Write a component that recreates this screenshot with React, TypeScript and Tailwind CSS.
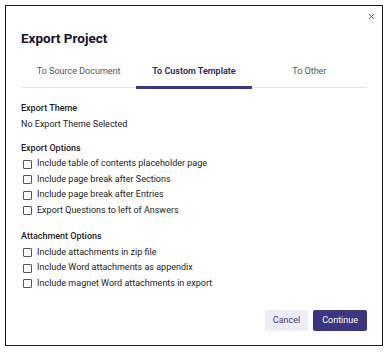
import { X } from 'lucide-react';

const exportOptions = [
  'Include table of contents placeholder page',
  'Include page break after Sections',
  'Include page break after Entries',
  'Export Questions to left of Answers',
];

const attachmentOptions = [
  'Include attachments in zip file',
  'Include Word attachments as appendix',
  'Include magnet Word attachments in export',
];

function CheckRow({ label }: { label: string }) {
  return (
    <label className="flex items-center gap-[5px] h-[15.5px] text-[9px] text-[#222]">
      <span className="ml-[2px] w-[9px] h-[9px] border border-[#555] rounded-[1px] bg-white" />
      {label}
    </label>
  );
}

export default function App() {
  const tabs = ['To Source Document', 'To Custom Template', 'To Other'];
  const active = 1;

  return (
    <div className="w-[390px] h-[353px] bg-white pl-[5px] pr-[7px] pt-[5px] pb-[7px] font-['Roboto',sans-serif]">
      <div className="relative flex flex-col h-full border-[1.5px] border-[#1c1c1c] bg-white pl-[15px] pr-[15px]">
        <button className="absolute right-[6px] top-[6px] text-[#444]">
          <X size={9} strokeWidth={2.2} />
        </button>

        <h1 className="mt-[22px] text-[13.5px] font-bold text-[#14132b]">Export Project</h1>

        {/* Tabs */}
        <div className="mt-[17px] flex border-b border-[#e4e4ea]">
          {tabs.map((t, i) => (
            <div
              key={t}
              className={`flex-1 text-center text-[9px] pb-[7px] ${
                i === active
                  ? 'font-semibold text-[#28245e] border-b-[3px] border-[#3b3680] -mb-[2px]'
                  : 'text-[#555]'
              }`}
            >
              {t}
            </div>
          ))}
        </div>

        <div className="mt-[14px] text-[9px] font-medium text-[#1b1b2b]">Export Theme</div>
        <div className="mt-[3px] text-[9px] text-[#222]">No Export Theme Selected</div>

        <div className="mt-[10px] text-[9px] font-medium text-[#1b1b2b]">Export Options</div>
        <div className="mt-[1px] flex flex-col">
          {exportOptions.map(o => (
            <CheckRow key={o} label={o} />
          ))}
        </div>

        <div className="mt-[12px] text-[9px] font-medium text-[#1b1b2b]">Attachment Options</div>
        <div className="mt-[1px] flex flex-col">
          {attachmentOptions.map(o => (
            <CheckRow key={o} label={o} />
          ))}
        </div>

        <div className="mt-auto mb-[14px] flex justify-end gap-[5px]">
          <button className="h-[21px] px-[8px] rounded-[2px] bg-[#eeedf7] text-[9px] text-[#3b3680]">Cancel</button>
          <button className="h-[21px] px-[9px] rounded-[2px] bg-[#3b3680] text-[9px] text-white">Continue</button>
        </div>
      </div>
    </div>
  );
}
